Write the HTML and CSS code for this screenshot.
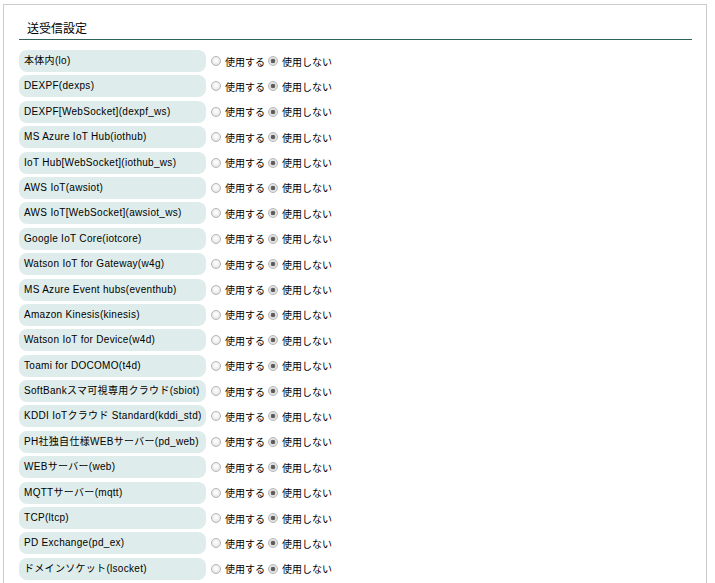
FILE: index.html
```html
<!DOCTYPE html>
<html lang="ja">
<head>
<meta charset="utf-8">
<link rel="stylesheet" href="styles.css">
</head>
<body>
<div class="panel">
  <h2 class="title">送受信設定</h2>
  <div class="rows">
    <div class="row"><div class="label">本体内(lo)</div><div class="opts"><label><input type="radio" name="r1">使用する</label><label><input type="radio" name="r1" checked>使用しない</label></div></div>
    <div class="row"><div class="label">DEXPF(dexps)</div><div class="opts"><label><input type="radio" name="r2">使用する</label><label><input type="radio" name="r2" checked>使用しない</label></div></div>
    <div class="row"><div class="label">DEXPF[WebSocket](dexpf_ws)</div><div class="opts"><label><input type="radio" name="r3">使用する</label><label><input type="radio" name="r3" checked>使用しない</label></div></div>
    <div class="row"><div class="label">MS Azure IoT Hub(iothub)</div><div class="opts"><label><input type="radio" name="r4">使用する</label><label><input type="radio" name="r4" checked>使用しない</label></div></div>
    <div class="row"><div class="label">IoT Hub[WebSocket](iothub_ws)</div><div class="opts"><label><input type="radio" name="r5">使用する</label><label><input type="radio" name="r5" checked>使用しない</label></div></div>
    <div class="row"><div class="label">AWS IoT(awsiot)</div><div class="opts"><label><input type="radio" name="r6">使用する</label><label><input type="radio" name="r6" checked>使用しない</label></div></div>
    <div class="row"><div class="label">AWS IoT[WebSocket](awsiot_ws)</div><div class="opts"><label><input type="radio" name="r7">使用する</label><label><input type="radio" name="r7" checked>使用しない</label></div></div>
    <div class="row"><div class="label">Google IoT Core(iotcore)</div><div class="opts"><label><input type="radio" name="r8">使用する</label><label><input type="radio" name="r8" checked>使用しない</label></div></div>
    <div class="row"><div class="label">Watson IoT for Gateway(w4g)</div><div class="opts"><label><input type="radio" name="r9">使用する</label><label><input type="radio" name="r9" checked>使用しない</label></div></div>
    <div class="row"><div class="label">MS Azure Event hubs(eventhub)</div><div class="opts"><label><input type="radio" name="r10">使用する</label><label><input type="radio" name="r10" checked>使用しない</label></div></div>
    <div class="row"><div class="label">Amazon Kinesis(kinesis)</div><div class="opts"><label><input type="radio" name="r11">使用する</label><label><input type="radio" name="r11" checked>使用しない</label></div></div>
    <div class="row"><div class="label">Watson IoT for Device(w4d)</div><div class="opts"><label><input type="radio" name="r12">使用する</label><label><input type="radio" name="r12" checked>使用しない</label></div></div>
    <div class="row"><div class="label">Toami for DOCOMO(t4d)</div><div class="opts"><label><input type="radio" name="r13">使用する</label><label><input type="radio" name="r13" checked>使用しない</label></div></div>
    <div class="row"><div class="label">SoftBankスマ可視専用クラウド(sbiot)</div><div class="opts"><label><input type="radio" name="r14">使用する</label><label><input type="radio" name="r14" checked>使用しない</label></div></div>
    <div class="row"><div class="label">KDDI IoTクラウド Standard(kddi_std)</div><div class="opts"><label><input type="radio" name="r15">使用する</label><label><input type="radio" name="r15" checked>使用しない</label></div></div>
    <div class="row"><div class="label">PH社独自仕様WEBサーバー(pd_web)</div><div class="opts"><label><input type="radio" name="r16">使用する</label><label><input type="radio" name="r16" checked>使用しない</label></div></div>
    <div class="row"><div class="label">WEBサーバー(web)</div><div class="opts"><label><input type="radio" name="r17">使用する</label><label><input type="radio" name="r17" checked>使用しない</label></div></div>
    <div class="row"><div class="label">MQTTサーバー(mqtt)</div><div class="opts"><label><input type="radio" name="r18">使用する</label><label><input type="radio" name="r18" checked>使用しない</label></div></div>
    <div class="row"><div class="label">TCP(ltcp)</div><div class="opts"><label><input type="radio" name="r19">使用する</label><label><input type="radio" name="r19" checked>使用しない</label></div></div>
    <div class="row"><div class="label">PD Exchange(pd_ex)</div><div class="opts"><label><input type="radio" name="r20">使用する</label><label><input type="radio" name="r20" checked>使用しない</label></div></div>
    <div class="row"><div class="label">ドメインソケット(lsocket)</div><div class="opts"><label><input type="radio" name="r21">使用する</label><label><input type="radio" name="r21" checked>使用しない</label></div></div>
  </div>
</div>
</body>
</html>
```
FILE: styles.css
```css
html, body {
  margin: 0;
  padding: 0;
  background: #ffffff;
}
body {
  font-family: "Liberation Sans", "Noto Sans CJK JP", sans-serif;
  color: #000;
  height: 583px;
  overflow: hidden;
}
.panel {
  margin: 4px 0 0 3px;
  width: 704px;
  height: 579px;
  overflow: hidden;
  border: 1px solid #cccccc;
  border-bottom: none;
  padding: 0 14px 0 15px;
  box-sizing: border-box;
}
.title {
  margin: 0;
  height: 35px;
  box-sizing: border-box;
  padding: 16px 0 0 8px;
  font-size: 12px;
  font-weight: normal;
  font-family: "Noto Sans CJK JP", sans-serif;
  line-height: 14px;
  border-bottom: 1px solid #2f6259;
}
.rows {
  padding-top: 10px;
  display: flex;
  flex-direction: column;
  gap: 3.4px;
}
.row {
  display: flex;
  align-items: center;
  height: 22px;
}
.label {
  width: 187px;
  height: 22px;
  box-sizing: border-box;
  padding-left: 5px;
  border-radius: 8px;
  background: #deedeb;
  font-size: 10px;
  line-height: 22px;
  letter-spacing: 0.3px;
  white-space: nowrap;
}
.opts {
  display: flex;
  align-items: center;
  padding-left: 5px;
  font-size: 10px;
  font-family: "Noto Sans CJK JP", sans-serif;
}
.opts label {
  display: flex;
  align-items: center;
  margin-right: 3px;
}
.opts input {
  appearance: none;
  -webkit-appearance: none;
  width: 10px;
  height: 10px;
  margin: 0 4px 0 0;
  border: 1px solid #b4b4b4;
  border-radius: 50%;
  background: radial-gradient(circle at 50% 40%, #ffffff 0%, #f2f2f2 45%, #d8d8d8 100%);
  box-sizing: border-box;
}
.opts input:checked {
  background: radial-gradient(circle, #555555 0px, #666666 2px, #e0e0e0 2.6px, #f0f0f0 100%);
}
```
